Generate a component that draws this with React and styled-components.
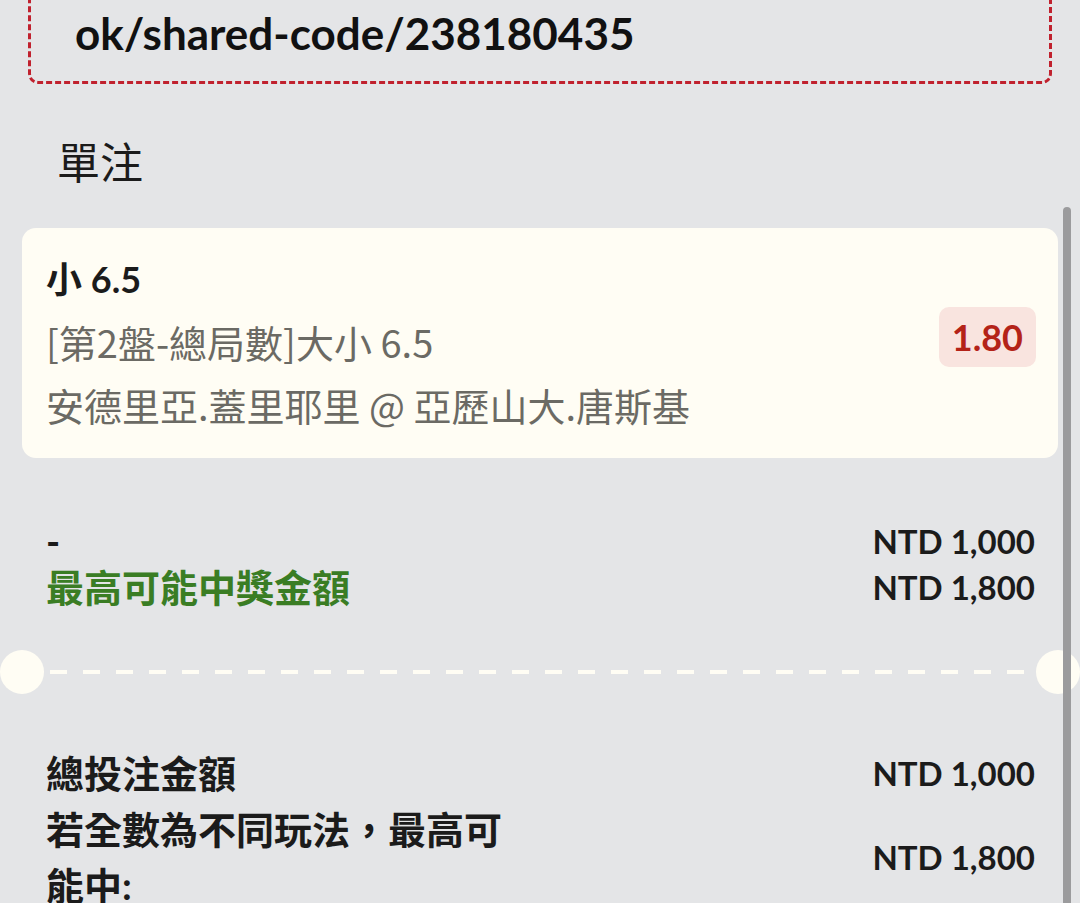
import React from "react";
import styled, { createGlobalStyle } from "styled-components";

const COLORS = {
  page: "#e4e5e7",
  cream: "#fffdf4",
  text: "#1b1b1b",
  muted: "#6b6a64",
  red: "#c0212e",
  odds: "#b42318",
  oddsBg: "#f9e4df",
  green: "#3a7d24",
  thumb: "#9b9b9d",
};

const FONT = `"Lato", "Noto Sans CJK TC", "Noto Sans", sans-serif`;
const CJK = `"Noto Sans CJK TC", "Noto Sans", sans-serif`;

const bet = {
  selection: "小 6.5",
  market: "[第2盤-總局數]大小 6.5",
  event: "安德里亞.蓋里耶里 @ 亞歷山大.唐斯基",
  odds: "1.80",
};

const GlobalStyle = createGlobalStyle`
  html, body {
    margin: 0;
    padding: 0;
    overflow: hidden;
    background: ${COLORS.page};
  }
  body {
    font-family: ${FONT};
    color: ${COLORS.text};
  }
`;

const App = () => {
  return (
    <>
      <GlobalStyle />
      <Page>
        <ShareBox>
          <ShareLine>https://pp.bet/zh-tw/sportsbo</ShareLine>
          <ShareLine>ok/shared-code/238180435</ShareLine>
        </ShareBox>

        <Title>單注</Title>

        <CardArea>
          <BetCard>
            <BetText>
              <Selection>{bet.selection}</Selection>
              <Muted>{bet.market}</Muted>
              <Muted>{bet.event}</Muted>
            </BetText>
            <Odds>{bet.odds}</Odds>
          </BetCard>
        </CardArea>

        <Summary>
          <SummaryLabel>-</SummaryLabel>
          <Amount>NTD 1,000</Amount>
          <SummaryLabel $green>最高可能中獎金額</SummaryLabel>
          <Amount>NTD 1,800</Amount>
        </Summary>

        <Divider>
          <Notch />
          <Dashes />
          <Notch />
        </Divider>

        <Totals>
          <TotalLabel>總投注金額</TotalLabel>
          <Amount>NTD 1,000</Amount>
          <TotalLabel>若全數為不同玩法，最高可能中:</TotalLabel>
          <Amount>NTD 1,800</Amount>
        </Totals>
      </Page>
      <ScrollThumb />
    </>
  );
};

const Page = styled.div`
  display: flex;
  flex-direction: column;
  width: 1080px;
`;

const ShareBox = styled.div`
  margin: -83px 28px 0 28px;
  padding: 20px 24px 17px 44px;
  border: 3px dashed ${COLORS.red};
  border-radius: 10px;
`;

const ShareLine = styled.div`
  font-family: "Lato", sans-serif;
  font-size: 44px;
  font-weight: 700;
  line-height: 62px;
  color: #111;
  white-space: nowrap;
`;

const Title = styled.h2`
  margin: 46px 0 0 57px;
  font-family: ${CJK};
  font-size: 43px;
  font-weight: 400;
  line-height: 60px;
  color: ${COLORS.text};
`;

const CardArea = styled.div`
  padding: 38px 22px 0 22px;
`;

const BetCard = styled.div`
  display: flex;
  align-items: center;
  justify-content: space-between;
  background: ${COLORS.cream};
  border-radius: 14px;
  padding: 20px 22px 22px 24px;
`;

const BetText = styled.div`
  display: flex;
  flex-direction: column;
`;

const Selection = styled.div`
  font-size: 36px;
  font-weight: 700;
  line-height: 62px;
  color: ${COLORS.text};
`;

const Muted = styled.div`
  font-family: ${CJK};
  font-size: 38px;
  font-weight: 400;
  line-height: 63px;
  color: ${COLORS.muted};
`;

const Odds = styled.div`
  display: flex;
  align-items: center;
  height: 60px;
  padding: 0 13px;
  margin-top: -10px;
  border-radius: 10px;
  background: ${COLORS.oddsBg};
  color: ${COLORS.odds};
  font-family: "Lato", sans-serif;
  font-size: 36px;
  font-weight: 700;
`;

const Summary = styled.div`
  display: grid;
  grid-template-columns: 1fr auto;
  align-items: center;
  margin-top: 60px;
  padding: 0 45px 0 46px;
  line-height: 46px;
`;

const SummaryLabel = styled.div`
  font-size: 38px;
  font-weight: 700;
  color: ${(p) => (p.$green ? COLORS.green : COLORS.text)};
`;

const Amount = styled.div`
  font-family: "Lato", sans-serif;
  font-size: 33px;
  font-weight: 700;
  text-align: right;
`;

const Divider = styled.div`
  display: flex;
  align-items: center;
  gap: 6px;
  margin-top: 40px;
`;

const Notch = styled.div`
  width: 44px;
  height: 44px;
  border-radius: 50%;
  background: ${COLORS.cream};
  flex-shrink: 0;
`;

const Dashes = styled.div`
  flex: 1;
  height: 4px;
  background: repeating-linear-gradient(
    to right,
    ${COLORS.cream} 0 17px,
    transparent 17px 33px
  );
`;

const Totals = styled.div`
  display: grid;
  grid-template-columns: 1fr auto;
  align-items: center;
  margin-top: 51px;
  padding: 0 45px 0 46px;
  line-height: 56px;
`;

const TotalLabel = styled.div`
  max-width: 470px;
  font-size: 38px;
  font-weight: 700;
`;

const ScrollThumb = styled.div`
  position: fixed;
  top: 207px;
  right: 9px;
  bottom: 0;
  width: 8px;
  border-radius: 4px 4px 0 0;
  background: ${COLORS.thumb};
`;

export default App;
